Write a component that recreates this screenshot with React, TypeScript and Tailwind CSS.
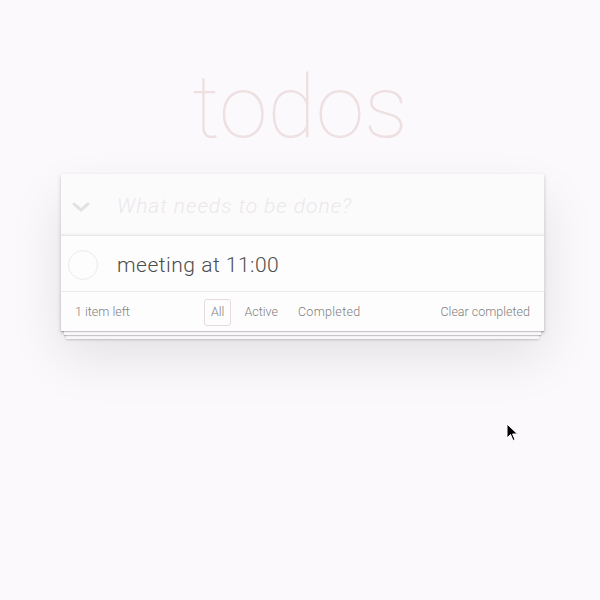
import React from "react";

export default function App() {
  return (
    <div className="relative min-h-[600px] w-full bg-[#fbf9fc] font-['Roboto','Liberation_Sans',sans-serif] font-light">
      <h1 className="pt-[63px] text-center text-[88px] font-thin leading-[88px] text-[#eedfe0]">
        todos
      </h1>
      <div className="ml-[61px] mt-[23px] w-[483px] bg-[#fefdfe] shadow-[0_2px_4px_0_rgba(0,0,0,0.2),0_25px_50px_0_rgba(0,0,0,0.1)]">
        <div className="flex h-[62px] items-center border-b border-[#e9e7ea] bg-[#fcfbfc] pl-[11px] pt-[4px] shadow-[inset_0_-2px_1px_rgba(0,0,0,0.03)]">
          <svg width="18" height="10" viewBox="0 0 18 10">
            <path d="M2 2 L9 8 L16 2" fill="none" stroke="#e3e1e4" strokeWidth="3" strokeLinecap="round" strokeLinejoin="round" />
          </svg>
          <span className="ml-[27px] text-[21px] italic tracking-[0.95px] text-[#ebe8eb]">What needs to be done?</span>
        </div>
        <div className="flex h-[56px] items-center border-b border-[#ecebed] pl-[7px] pt-[2px]">
          <div className="h-[30px] w-[30px] rounded-full border border-[#ebeaec]" />
          <span className="ml-[19px] mt-[3px] text-[21px] tracking-[0.5px] text-[#4d4d4d]">meeting at 11:00</span>
        </div>
        <div className="relative flex h-[39px] items-center px-[14px] pt-[2px] text-[12.5px] text-[#808080] shadow-[0_1px_1px_rgba(0,0,0,0.2),0_7px_0_-3px_#f9f7fa,0_8px_1px_-3px_rgba(0,0,0,0.2),0_13px_0_-5px_#f9f7fa,0_14px_2px_-5px_rgba(0,0,0,0.2)]">
          <span className="w-[126px]">1 item left</span>
          <ul className="flex items-center">
            <li className="mx-[3px] rounded-[3px] border border-[#e6dcdd] px-[6px] py-[3px]">All</li>
            <li className="mx-[3px] border border-transparent px-[6px] py-[3px]">Active</li>
            <li className="mx-[3px] border border-transparent px-[6px] py-[3px] tracking-[0.3px]">Completed</li>
          </ul>
          <span className="ml-auto">Clear completed</span>
        </div>
      </div>
      <svg className="absolute left-[506px] top-[423px]" width="13" height="19" viewBox="0 0 13 19">
        <path d="M1 1 L1 15 L4.5 11.5 L7 17.5 L9 16.6 L6.6 11 L11.5 11 Z" fill="#000" stroke="#fff" strokeWidth="1" strokeLinejoin="round" />
      </svg>
    </div>
  );
}
